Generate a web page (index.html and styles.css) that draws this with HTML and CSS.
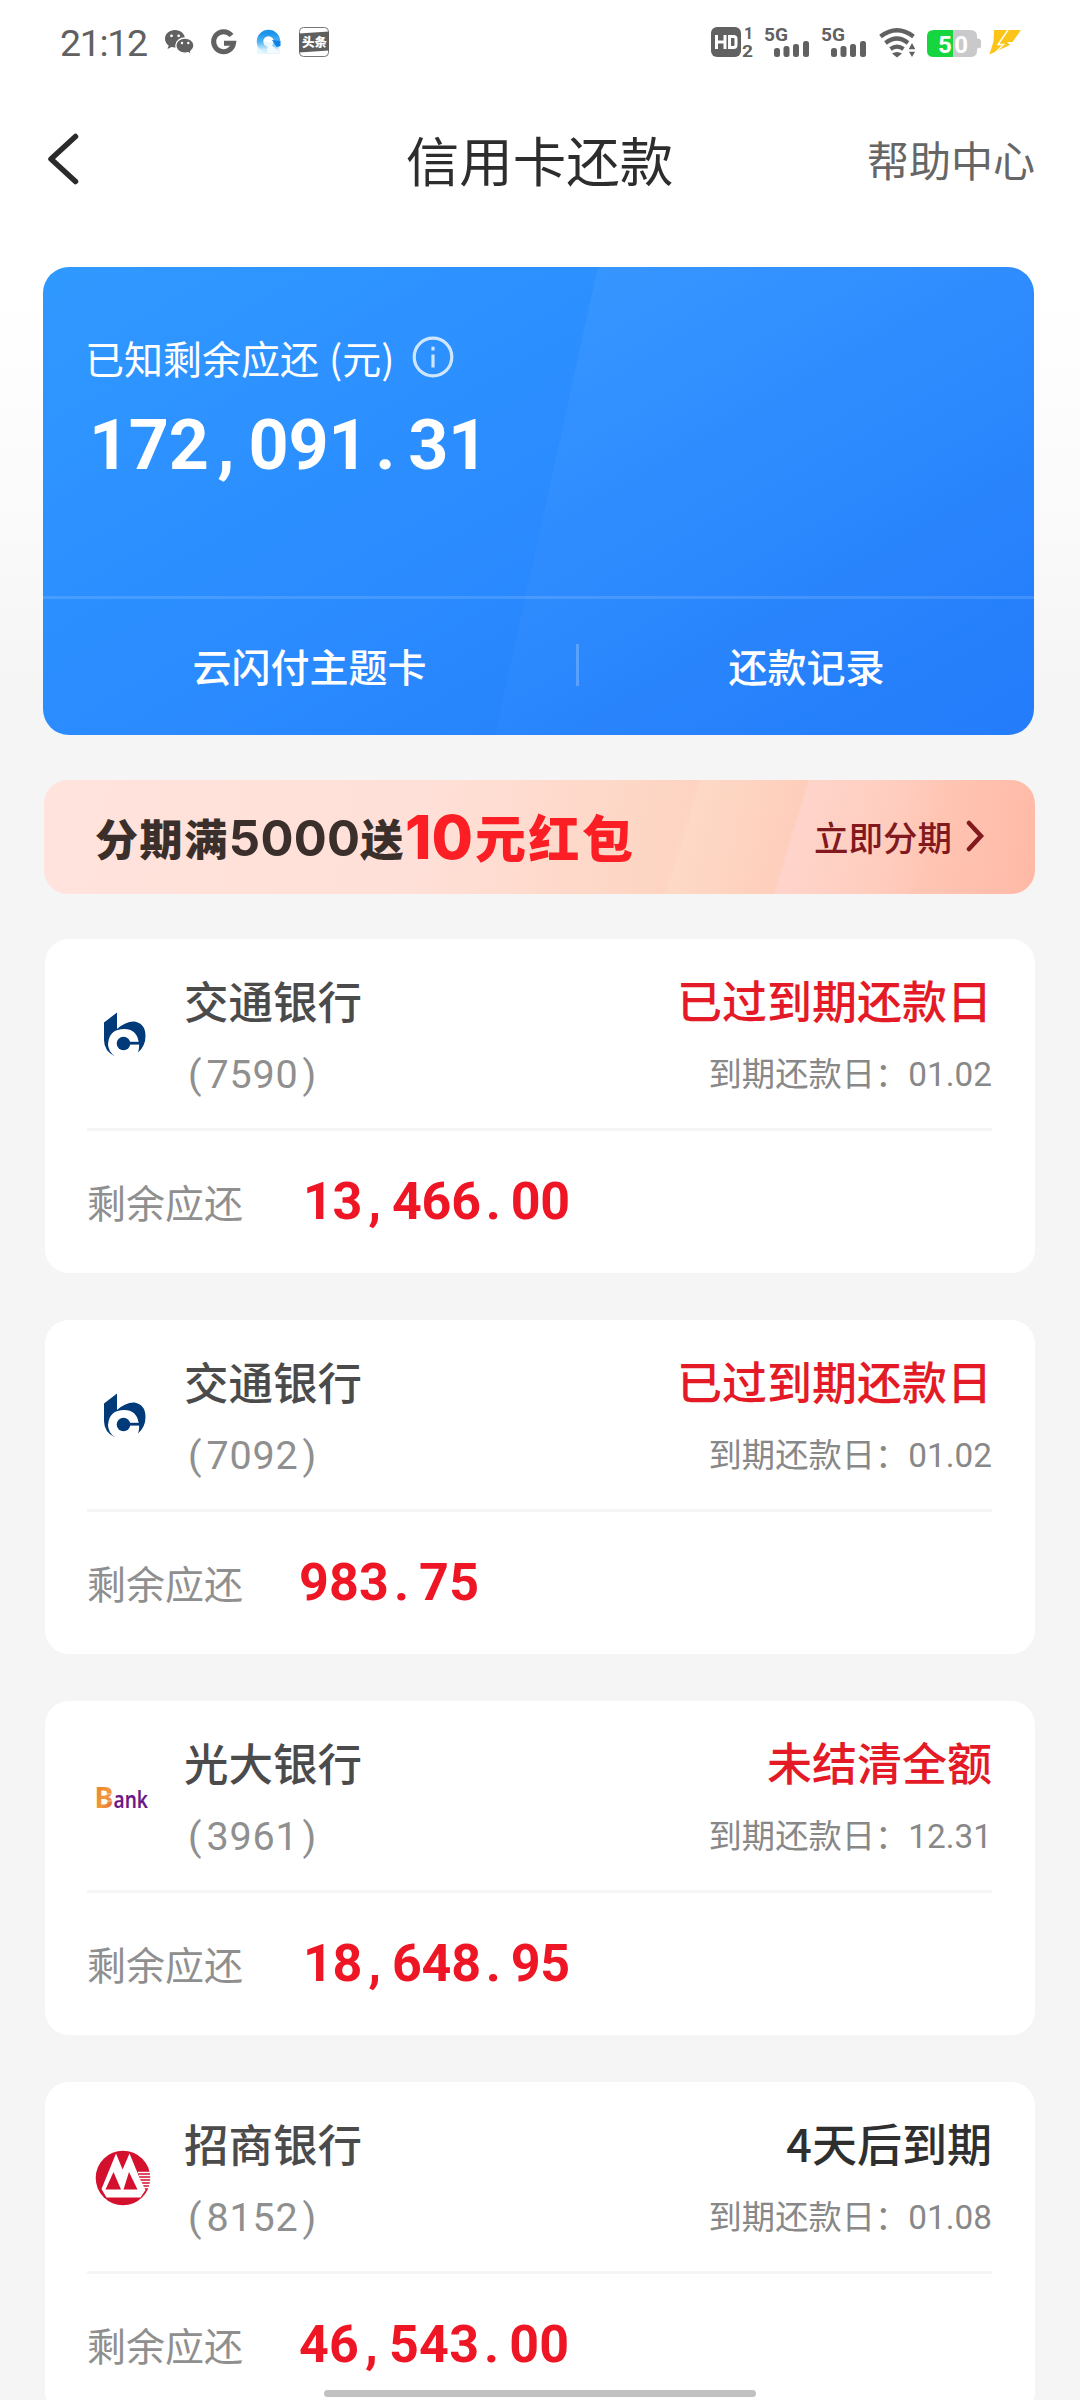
FILE: index.html
```html
<!DOCTYPE html>
<html lang="zh-CN">
<head>
<meta charset="utf-8">
<title>信用卡还款</title>
<link rel="stylesheet" href="styles.css">
</head>
<body>
<div class="screen">
  <header class="status">
    <span class="time">21:12</span>
    <svg class="ic-notify" width="170" height="34" viewBox="163 25 170 34">
      <path fill="#616161" d="M175 30c-5.600 0-10 3.900-10 8.800 0 2.800 1.400 5.200 3.700 6.800l-1.200 3.400 4-2c1.100.3 2.300.5 3.500.5 5.600 0 10-3.900 10-8.700s-4.400-8.800-10-8.800z"/>
      <path fill="#616161" stroke="#fff" stroke-width="1.300" d="M185 38c-5.200 0-9.200 3.400-9.200 7.600s4 7.600 9.200 7.600c1.100 0 2.200-.2 3.200-.5l3.300 1.900-.9-3.100c2.100-1.400 3.400-3.500 3.400-5.900 0-4.200-4-7.600-9-7.600z"/>
      <g fill="#fff"><circle cx="171.500" cy="35.800" r="1.400"/><circle cx="178.700" cy="35.800" r="1.400"/><circle cx="182" cy="43" r="1.200"/><circle cx="188.300" cy="43" r="1.200"/></g>
      <path fill="none" stroke="#616161" stroke-width="5" d="M231.500 35.500A10 10 0 1 0 233.500 43.300H224"/>
      <defs><linearGradient id="q" x1="0" y1="0" x2="0" y2="1"><stop offset="0" stop-color="#1b93ea"/><stop offset=".55" stop-color="#56b6f3"/><stop offset="1" stop-color="#d5effc"/></linearGradient></defs>
      <path fill="#e8f6fd" d="M257 42h23v12h-23z"/>
      <circle cx="268.500" cy="41.500" r="8.500" fill="none" stroke="url(#q)" stroke-width="6.500"/>
      <path fill="#0d83e6" d="M272 40l8.500 1v5l-4 1z"/>
      <path fill="#f4fbff" d="M268 42l12 11h-13z"/>
      <rect x="299.500" y="27.500" width="29" height="29" rx="4" fill="#fff" stroke="#777"/>
      <path fill="#5f5f5f" d="M299 33.500l30-2v19l-30 2z"/>
      <text class="tt" x="302" y="46.500">头条</text>
    </svg>
    <svg class="ic-system" width="312" height="40" viewBox="710 22 312 40">
      <rect x="711" y="27" width="30" height="30" rx="6" fill="#616161"/>
      <path fill="none" stroke="#fff" stroke-width="3" d="M716.500 35v14M725 35v14M716.500 42H725M729.500 36.500h4q2.500 0 2.500 2.500v6q0 2.500-2.500 2.500h-4z"/>
      <text class="sim" x="744" y="39">1</text><text class="sim" x="742" y="56.500" textLength="11" lengthAdjust="spacingAndGlyphs">2</text>
      <text class="net" x="764" y="41" textLength="24" lengthAdjust="spacingAndGlyphs">5G</text>
      <text class="net" x="821" y="41" textLength="24" lengthAdjust="spacingAndGlyphs">5G</text>
      <g id="sig" fill="#616161">
        <rect x="774" y="48" width="6" height="9" rx="2.500"/><rect x="783.500" y="46" width="6" height="11" rx="2.500"/><rect x="793" y="44" width="6" height="13" rx="2.500"/><rect x="803" y="41" width="6" height="16" rx="2.500"/>
      </g>
      <use href="#sig" x="57"/>
      <g fill="none" stroke="#616161" stroke-width="4.200"><path d="M880.500 36.500q16.500-12.500 33 0"/><path d="M885.500 43q11.500-9 22.500 0"/><path d="M890.500 49q6.500-4.800 13 0"/></g>
      <path fill="#616161" d="M892 53.500q5-3 10 0l-5 4z"/>
      <path fill="#616161" stroke="#fff" stroke-width="1.500" d="M907.500 50l4.500-8.500 4.500 8.500zM907.500 51h9l-4.500 7.500z"/>
      <path fill="#c9c8cb" d="M953 30h17q7 0 7 6v2.500q4 0 4 2.500v5q0 2.500-4 2.500V51q0 6-7 6h-17z"/>
      <path fill="#17d53f" d="M953 30h-19q-7 0-7 6v15q0 6 7 6h19z"/>
      <text class="batt" x="938" y="52.500" textLength="30">50</text>
      <path fill="#fcc419" d="M994 30h27l-8.500 12h-5.500l3 3-20.500 9.500 4-13z"/>
      <path fill="none" stroke="#fff" stroke-width="1.400" d="M1008 30l-10 14.500h5.500L994 54"/>
    </svg>
  </header>

  <nav class="nav">
    <svg class="back" width="40" height="56" viewBox="0 0 40 56"><path d="M33.500 5.500 9 28 33.500 50.500"/></svg>
    <h1 class="title">信用卡还款</h1>
    <span class="help">帮助中心</span>
  </nav>

  <section class="total">
    <div class="total-main">
      <div class="total-label">已知剩余应还<span class="unit">(元)</span>
        <svg width="42" height="42" viewBox="0 0 42 42"><circle cx="21" cy="21" r="18.800"/><path d="M21 18.500v13M21 10.800v3.800"/></svg>
      </div>
      <div class="total-num">172<i>,</i>091<i>.</i>31</div>
    </div>
    <div class="total-links"><span class="link theme">云闪付主题卡</span><span class="link">还款记录</span></div>
  </section>

  <section class="banner">
    <div class="promo"><span>分期满</span><span class="n5">5000</span><span>送</span><b class="n10">10</b><b class="gift">元红包</b></div>
    <div class="go">立即分期<svg width="20" height="32" viewBox="0 0 20 32"><path d="M3 3l12 13L3 29"/></svg></div>
  </section>

  <main class="cards">
    <article class="card">
      <div class="card-top">
        <svg class="logo" viewBox="0 0 70 70"><use href="#bocom"/></svg>
        <div class="bank"><div class="name">交通银行</div><div class="no"><i>(</i>7590<i>)</i></div></div>
        <div class="due"><div class="state">已过到期还款日</div><div class="date">到期还款日：01.02</div></div>
      </div>
      <div class="card-bottom"><span class="label">剩余应还</span><span class="amt lead">13<i>,</i>466<i>.</i>00</span></div>
    </article>
    <article class="card">
      <div class="card-top">
        <svg class="logo" viewBox="0 0 70 70">
          <g id="bocom">
            <path fill="#003a78" d="M16 22.500 29 12.500V29Q38 21 46.500 21.500 57.500 23.500 57.500 36 57.500 46 50 52.500 52 47 50.500 41 48 29 36.500 29 21 29 20 44 20 51 27 56.500 16 51 16 40z"/>
            <circle cx="35.500" cy="43.500" r="6.800" fill="#003a78"/><path fill="#003a78" d="M40 41.800h11v2.800H40z"/>
          </g>
        </svg>
        <div class="bank"><div class="name">交通银行</div><div class="no"><i>(</i>7092<i>)</i></div></div>
        <div class="due"><div class="state">已过到期还款日</div><div class="date">到期还款日：01.02</div></div>
      </div>
      <div class="card-bottom"><span class="label">剩余应还</span><span class="amt">983<i>.</i>75</span></div>
    </article>
    <article class="card">
      <div class="card-top">
        <svg class="logo" viewBox="0 0 70 70">
          <defs><linearGradient id="eb" x1="0" y1="0" x2="1" y2="1"><stop offset="0" stop-color="#e8762c"/><stop offset=".55" stop-color="#f39a3c"/><stop offset="1" stop-color="#e0562a"/></linearGradient></defs>
          <text class="eb-b" x="6.500" y="45.500" textLength="19" lengthAdjust="spacingAndGlyphs" fill="url(#eb)">B</text>
          <path stroke="#fff" stroke-width="1" opacity=".6" d="M16 32h9M18 39h8"/>
          <text class="eb-t" x="25.500" y="45.500" textLength="34.500" lengthAdjust="spacingAndGlyphs">ank</text>
        </svg>
        <div class="bank"><div class="name">光大银行</div><div class="no"><i>(</i>3961<i>)</i></div></div>
        <div class="due"><div class="state">未结清全额</div><div class="date">到期还款日：12.31</div></div>
      </div>
      <div class="card-bottom"><span class="label">剩余应还</span><span class="amt lead">18<i>,</i>648<i>.</i>95</span></div>
    </article>
    <article class="card">
      <div class="card-top">
        <svg class="logo" viewBox="0 0 70 70">
          <circle cx="35" cy="35" r="27.300" fill="#d3112f"/>
          <path fill="#fff" d="M28 10.500 34.600 26.500 41.500 10.500 52.500 37 57.500 47 52.500 54.500H18.500L13.500 46z"/>
          <path fill="#d3112f" d="M25.500 29 17.500 46.500H33zM41 29 35.500 46.500H49.500z"/>
          <path stroke="#fff" stroke-width="1.300" d="M50 29.500h13M51 32.500h12M52 35.500h11M53 38.500h10M54 41.500h9M55 44.500h8"/>
        </svg>
        <div class="bank"><div class="name">招商银行</div><div class="no"><i>(</i>8152<i>)</i></div></div>
        <div class="due"><div class="state later">4天后到期</div><div class="date">到期还款日：01.08</div></div>
      </div>
      <div class="card-bottom"><span class="label">剩余应还</span><span class="amt">46<i>,</i>543<i>.</i>00</span></div>
    </article>
  </main>
  <div class="home-bar"></div>
</div>
</body>
</html>
```
FILE: styles.css
```css
* { box-sizing: border-box; margin: 0; padding: 0; }
body { background: #f5f5f5; font-family: "Noto Sans CJK SC", sans-serif; color: #333; }
i { font-style: normal; display: inline-block; text-align: center; }
svg { display: block; flex: none; }
.screen { position: relative; width: 1080px; height: 2400px; overflow: hidden; background: linear-gradient(#fff 280px, #fdfdfd 400px, #f5f5f5 700px); }

.status { display: flex; align-items: center; height: 84px; padding: 0 58px 0 60px; }
.time { width: 103px; padding-top: 2px; font: 400 37.5px/40px Roboto, sans-serif; letter-spacing: -1.3px; color: #616161; }
.ic-system { margin-left: auto; }
.tt { font: 900 12.5px "Noto Sans CJK SC", sans-serif; fill: #fff; }
.sim { font: 700 16px Roboto, sans-serif; fill: #616161; }
.net { font: 700 19px Roboto, sans-serif; fill: #616161; }
.batt { font: 700 24px Roboto, sans-serif; fill: #fff; }

.nav { display: grid; grid-template-columns: 1fr auto 1fr; align-items: center; height: 150px; padding: 0 45px 0 42px; }
.back path { fill: none; stroke: #2b2b2b; stroke-width: 5.5; stroke-linecap: round; stroke-linejoin: round; }
.title { padding: 0 0 1px 2px; font-size: 53.5px; font-weight: 400; line-height: 70px; color: #2d2d2d; }
.help { justify-self: end; font-size: 42px; line-height: 60px; color: #666; }

.total { position: relative; display: flex; flex-direction: column; height: 468px; margin: 33px 46px 0 43px; border-radius: 26px; overflow: hidden; color: #fff; background: linear-gradient(150deg, #3099ff 0%, #2b8dff 42%, #247cfa 100%); }
.total::before { content: ""; position: absolute; inset: 0; background: linear-gradient(150deg, rgba(255,255,255,.08), rgba(255,255,255,0) 85%); clip-path: polygon(555px 0, 100% 0, 100% 100%, 452px 100%); }
.total-main { position: relative; height: 332px; padding: 60px 43px 0 42px; border-bottom: 3px solid rgba(255,255,255,.13); }
.total-label { display: flex; align-items: center; height: 60px; font-size: 39px; }
.unit { margin: 0 18px 0 10px; }
.total-label svg { margin-top: -1px; fill: none; stroke: #cfe6ff; stroke-width: 3.2; }
.total-num { margin: 18px 0 0 4px; font: 700 70px/80px Roboto, sans-serif; letter-spacing: -.3px; }
.total-num i { width: 40px; padding-right: 6px; }
.total-links { position: relative; display: flex; align-items: center; flex: 1; padding-bottom: 4px; }
.link { flex: 1; text-align: center; font-size: 39px; font-weight: 500; line-height: 42px; }
.theme { flex: none; width: 536px; border-right: 3px solid rgba(255,255,255,.22); }

.banner { display: flex; align-items: center; justify-content: space-between; height: 114px; margin: 45px 45px 0 44px; padding: 0 49px 0 51px; border-radius: 24px; background: linear-gradient(107deg, transparent 624px, rgba(255,226,208,.35) 630px, rgba(255,214,190,0) 720px), linear-gradient(107deg, transparent 730px, rgba(255,214,208,.7) 733px, rgba(255,190,178,0) 870px), linear-gradient(100deg, #ffe3dc 0%, #ffe0d8 38%, #fdd3bf 66%, #ffc9b8 85%, #ffb9a6 100%); }
.promo { display: flex; align-items: center; height: 76px; font-size: 43px; font-weight: 900; letter-spacing: 1.6px; line-height: 76px; color: #3a2f2a; }
.n5 { padding-top: 4px; font: 700 49px/76px Inter, sans-serif; letter-spacing: .3px; }
.n10 { margin-right: 2px; font: 800 60px/72px Inter, sans-serif; letter-spacing: 0; color: #fb1f25; }
.gift { padding-bottom: 3px; font-size: 51px; font-weight: 900; letter-spacing: 2.5px; line-height: 70px; color: #fb1f25; }
.go { display: flex; align-items: center; gap: 14px; padding-bottom: 2px; font-size: 34.5px; font-weight: 500; color: #81191f; }
.go path { fill: none; stroke: #81191f; stroke-width: 4.5; stroke-linecap: round; }

.cards { display: flex; flex-direction: column; gap: 47.5px; margin: 45px 45px 0; }
.card { height: 333.5px; flex: none; padding: 0 43px 0 42px; border-radius: 24px; background: #fff; }
.card-top { display: flex; height: 192px; padding-top: 34px; border-bottom: 3px solid #f5f5f5; }
.logo { width: 70px; height: 70px; margin: 27px 0 0 1px; }
.bank { margin-left: 26px; }
.name { font-size: 44.5px; line-height: 54px; font-weight: 500; color: #4b4b4b; }
.no { margin-top: 25px; font: 400 39.5px/46px Roboto, sans-serif; letter-spacing: .8px; color: #8f8f8f; }
.no i { width: 22.5px; }
.due { margin-left: auto; text-align: right; }
.state { font-size: 45px; line-height: 54px; font-weight: 500; color: #e41a26; }
.later { color: #2f2f2f; }
.date { margin-top: 25px; font-family: Roboto, "Noto Sans CJK SC", sans-serif; font-size: 33.3px; line-height: 46px; color: #888; }
.card-bottom { display: flex; align-items: center; height: 141px; }
.label { width: 212px; padding-bottom: 2px; font-size: 39px; line-height: 60px; color: #8f8f8f; }
.amt { font: 700 52px/60px Roboto, sans-serif; letter-spacing: .2px; color: #ee1524; }
.lead { margin-left: 4px; letter-spacing: -.3px; }
.amt i { width: 30px; padding-right: 5px; }

.home-bar { position: absolute; left: 324px; bottom: 3px; width: 432px; height: 7px; border-radius: 4px; background: #c1c1c1; }
.eb-b { font: 700 28px "Noto Sans", sans-serif; }
.eb-t { font: 600 24px "Noto Sans", sans-serif; fill: #6b1a86; }
```
